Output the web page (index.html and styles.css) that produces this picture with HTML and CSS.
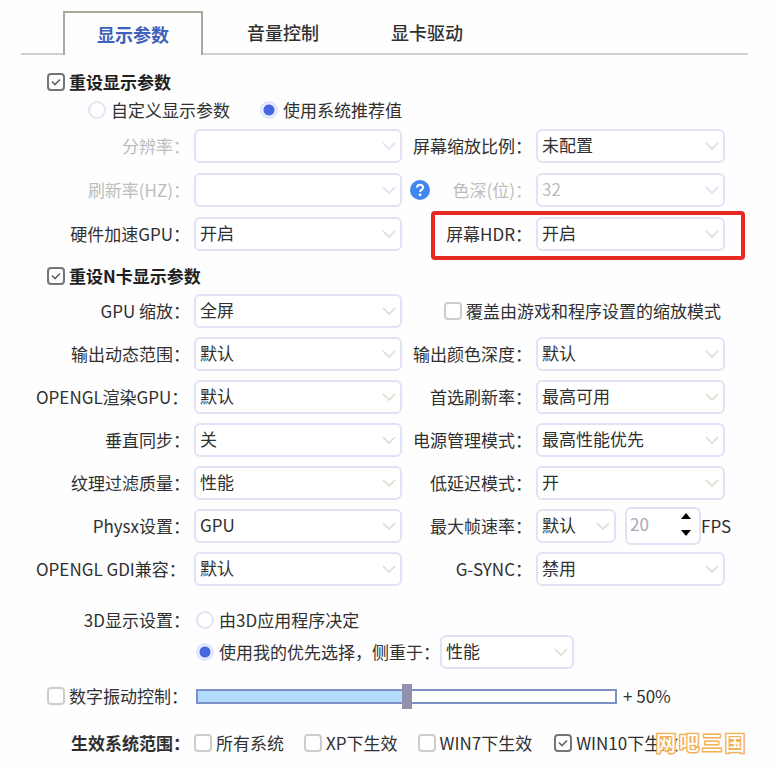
FILE: index.html
```html
<!DOCTYPE html>
<html lang="zh-CN">
<head>
    <meta charset="UTF-8">
    <meta name="viewport" content="width=device-width, initial-scale=1.0">
    <title>显示参数</title>
    <link rel="stylesheet" href="styles.css">
</head>
<body>
    <nav class="tabs">
        <button class="tab active" type="button">显示参数</button>
        <button class="tab tab-volume" type="button">音量控制</button>
        <button class="tab tab-driver" type="button">显卡驱动</button>
    </nav>

    <form class="settings">
        <label class="section-title"><input type="checkbox" checked>重设显示参数</label>
        <div class="mode-choice">
            <label><input type="radio" name="mode">自定义显示参数</label>
            <label><input type="radio" name="mode" checked>使用系统推荐值</label>
        </div>

        <div class="rows display-rows">
            <div class="row">
                <div class="field disabled">
                    <label for="resolution">分辨率：</label>
                    <select id="resolution" disabled><option></option></select>
                </div>
                <div class="field right">
                    <label for="scale">屏幕缩放比例：</label>
                    <select id="scale"><option>未配置</option></select>
                </div>
            </div>
            <div class="row">
                <div class="field disabled">
                    <label for="refresh">刷新率(HZ)：</label>
                    <select id="refresh" disabled><option></option></select>
                </div>
                <div class="field right disabled">
                    <div class="label-with-help">
                        <button class="help" type="button" aria-label="帮助">
                            <svg width="20" height="20" viewBox="0 0 20 20">
                                <circle cx="10" cy="10" r="10" fill="#3f87ee"/>
                                <path d="M7 7.6C7 5.8 8.2 4.7 10 4.7s3.1 1.1 3.1 2.7c0 2.2-2.9 2.3-2.9 4.6" fill="none" stroke="#fff" stroke-width="2.1"/>
                                <circle cx="10.1" cy="14.8" r="1.4" fill="#fff"/>
                            </svg>
                        </button>
                        <label for="depth">色深(位)：</label>
                    </div>
                    <select id="depth" disabled><option>32</option></select>
                </div>
            </div>
            <div class="row">
                <div class="field">
                    <label for="hw-gpu">硬件加速GPU：</label>
                    <select id="hw-gpu"><option>开启</option></select>
                </div>
                <div class="field right highlight">
                    <label for="hdr">屏幕HDR：</label>
                    <select id="hdr"><option>开启</option></select>
                </div>
            </div>
        </div>

        <label class="section-title"><input type="checkbox" checked>重设N卡显示参数</label>

        <div class="rows nvidia-rows">
            <div class="row">
                <div class="field">
                    <label for="gpu-scale">GPU 缩放：</label>
                    <select id="gpu-scale"><option>全屏</option></select>
                </div>
                <label class="override"><input type="checkbox">覆盖由游戏和程序设置的缩放模式</label>
            </div>
            <div class="row">
                <div class="field">
                    <label for="range">输出动态范围：</label>
                    <select id="range"><option>默认</option></select>
                </div>
                <div class="field right">
                    <label for="color-depth">输出颜色深度：</label>
                    <select id="color-depth"><option>默认</option></select>
                </div>
            </div>
            <div class="row">
                <div class="field long">
                    <label for="gl-gpu">OPENGL渲染GPU：</label>
                    <select id="gl-gpu"><option>默认</option></select>
                </div>
                <div class="field right">
                    <label for="prefer-refresh">首选刷新率：</label>
                    <select id="prefer-refresh"><option>最高可用</option></select>
                </div>
            </div>
            <div class="row">
                <div class="field">
                    <label for="vsync">垂直同步：</label>
                    <select id="vsync"><option>关</option></select>
                </div>
                <div class="field right">
                    <label for="power">电源管理模式：</label>
                    <select id="power"><option>最高性能优先</option></select>
                </div>
            </div>
            <div class="row">
                <div class="field">
                    <label for="texture">纹理过滤质量：</label>
                    <select id="texture"><option>性能</option></select>
                </div>
                <div class="field right">
                    <label for="latency">低延迟模式：</label>
                    <select id="latency"><option>开</option></select>
                </div>
            </div>
            <div class="row">
                <div class="field">
                    <label for="physx">Physx设置：</label>
                    <select id="physx"><option>GPU</option></select>
                </div>
                <div class="field right">
                    <label for="max-fps">最大帧速率：</label>
                    <div class="fps">
                        <select id="max-fps"><option>默认</option></select>
                        <div class="spinner">
                            <input id="fps-value" type="number" value="20">
                            <div class="spinner-buttons">
                                <button type="button" aria-label="增加"><svg width="12" height="7" viewBox="0 0 12 7"><path d="M6 0l5 6H1z"/></svg></button>
                                <button type="button" aria-label="减少"><svg width="12" height="7" viewBox="0 0 12 7"><path d="M6 7l5-6H1z"/></svg></button>
                            </div>
                        </div>
                        <label for="fps-value">FPS</label>
                    </div>
                </div>
            </div>
            <div class="row">
                <div class="field long">
                    <label for="gdi">OPENGL GDI兼容：</label>
                    <select id="gdi"><option>默认</option></select>
                </div>
                <div class="field right">
                    <label for="gsync">G-SYNC：</label>
                    <select id="gsync"><option>禁用</option></select>
                </div>
            </div>
        </div>

        <div class="three-d">
            <span class="group-label">3D显示设置：</span>
            <div class="three-d-options">
                <label><input type="radio" name="three-d">由3D应用程序决定</label>
                <div class="prefer">
                    <label><input type="radio" name="three-d" checked>使用我的优先选择，侧重于：</label>
                    <select aria-label="侧重于"><option>性能</option></select>
                </div>
            </div>
        </div>

        <div class="vibrance">
            <label class="vibrance-label"><input type="checkbox">数字振动控制：</label>
            <input class="slider" type="range" min="0" max="100" value="50" aria-label="数字振动">
            <output>+ 50%</output>
        </div>

        <div class="systems">
            <span class="group-label">生效系统范围：</span>
            <div class="system-list">
                <label><input type="checkbox">所有系统</label>
                <label><input type="checkbox">XP下生效</label>
                <label><input type="checkbox">WIN7下生效</label>
                <label class="win10"><input type="checkbox" checked>WIN10下生效</label>
            </div>
            <div class="watermark"><span>网</span><span>吧</span><span>三</span><span>国</span></div>
        </div>
    </form>
</body>
</html>
```

FILE: styles.css
```css
* {
    box-sizing: border-box;
}

body {
    margin: 0;
    background: #fefefe;
    color: #303030;
    font-family: "Noto Sans CJK SC", sans-serif;
    font-size: 17px;
    line-height: 24px;
}

button,
input,
select {
    margin: 0;
    padding: 0;
    font: inherit;
    color: inherit;
}

label,
output,
.group-label {
    white-space: nowrap;
}

/* Tabs */
.tabs {
    display: flex;
    height: 44px;
    margin: 11px 27px 0 21px;
    padding-left: 42px;
    border-bottom: 2px solid #d0d1c9;
}

.tab {
    height: 42px;
    border: none;
    background: none;
    font-size: 18px;
    font-weight: 500;
}

.tab.active {
    height: 44px;
    padding: 0 32px;
    border: 2px solid #a8a99c;
    border-bottom: none;
    background: #fefefe;
    color: #3f62bd;
    font-weight: bold;
}

.tab-volume {
    padding: 0 44px;
}

.tab-driver {
    padding: 0 28px;
}

.settings {
    padding: 15px 50px 8px 36px;
}

/* Check boxes and radios */
input[type="checkbox"],
input[type="radio"] {
    appearance: none;
    flex: none;
    width: 18px;
    height: 18px;
    margin-right: 4px;
    border: 2px solid #cdcdcd;
    border-radius: 4px;
    background: #fff center / 14px 14px no-repeat;
}

input[type="checkbox"]:checked {
    border-color: #73757a;
    background-image: url('data:image/svg+xml,<svg xmlns="http://www.w3.org/2000/svg" viewBox="0 0 14 14"><path d="M3 6.5l3 3 5-5" fill="none" stroke="%23606266" stroke-width="1.6"/></svg>');
}

input[type="radio"] {
    margin-right: 5px;
    border-color: #e4e4f6;
    border-radius: 50%;
}

input[type="radio"]:checked {
    border-color: #dfe5fb;
    background: radial-gradient(circle, #4568e2 5px, #eef1fd 6px);
}

label:has(> input) {
    display: flex;
    align-items: center;
}

.section-title {
    margin-left: 11px;
    color: #202020;
    font-weight: bold;
}

.mode-choice {
    display: flex;
    gap: 30px;
    margin: 4px 0 0 52px;
}

/* Setting rows */
.rows {
    display: grid;
    gap: 9px;
}

.display-rows {
    gap: 10px;
    margin: 7px 0 13px;
}

.nvidia-rows {
    margin-top: 6px;
}

.row {
    display: grid;
    grid-template-columns: 366fr 319fr;
    grid-template-rows: 34px;
    gap: 4px;
}

.field {
    position: relative;
    display: grid;
    grid-template-columns: 154px minmax(0, 1fr);
    grid-template-rows: 34px;
    gap: 4px;
    align-items: center;
    text-align: right;
}

.field.right {
    grid-template-columns: 126px minmax(0, 1fr);
}

.field.long > label {
    text-align: left;
}

.field.disabled {
    color: #bdbdbd;
}

.label-with-help {
    display: flex;
    align-items: center;
    justify-content: space-between;
    padding-left: 4px;
}

.help {
    display: flex;
    border: none;
    background: none;
}

select {
    appearance: none;
    width: 100%;
    height: 34px;
    padding: 0 28px 2px 4px;
    border: 2px solid #e2e2f6;
    border-radius: 6px;
    background: #fff url('data:image/svg+xml,<svg xmlns="http://www.w3.org/2000/svg" viewBox="0 0 14 8"><path d="M1 1l6 6 6-6" fill="none" stroke="%23dcdcd0" stroke-width="1.6"/></svg>') right 4px center / 14px 8px no-repeat;
}

select:disabled {
    opacity: 1;
    color: #bdbdbd;
    background-image: url('data:image/svg+xml,<svg xmlns="http://www.w3.org/2000/svg" viewBox="0 0 14 8"><path d="M1 1l6 6 6-6" fill="none" stroke="%23dddff0" stroke-width="1.6"/></svg>');
}

.highlight::after {
    content: "";
    position: absolute;
    inset: -6px -20px -9px 25px;
    border: 4px solid #e62a22;
    border-radius: 4px;
    pointer-events: none;
}

.override {
    padding-left: 38px;
}

.fps {
    display: flex;
    align-items: center;
}

.fps select {
    flex: none;
    width: 80px;
    margin-right: 9px;
}

.spinner {
    display: flex;
    flex: 1;
    min-width: 76px;
    height: 38px;
    padding: 0 7px 4px 3px;
    border: 2px solid #e2e2f6;
    border-radius: 6px;
    background: #fff;
}

.spinner input {
    flex: 1;
    width: 0;
    border: none;
    background: none;
    color: #a9a9b8;
    appearance: textfield;
}

.spinner-buttons {
    display: flex;
    flex-direction: column;
    justify-content: space-between;
    padding: 4px 0 3px;
}

.spinner-buttons button {
    display: flex;
    border: none;
    background: none;
}

/* 3D settings */
.three-d {
    display: grid;
    grid-template-columns: 154px 1fr;
    gap: 6px;
    margin-top: 22px;
}

.group-label {
    text-align: right;
}

.three-d-options {
    display: grid;
    gap: 3px;
}

.prefer {
    display: flex;
    align-items: center;
}

.prefer select {
    width: 134px;
}

/* Digital vibrance */
.vibrance {
    display: flex;
    align-items: center;
    margin: 15px 0 0 11px;
}

.vibrance-label {
    width: 149px;
}

.slider {
    appearance: none;
    flex: 1;
    height: 15px;
    border: 2px solid #7c8fc6;
    background: linear-gradient(to right, #b3dbfd 50%, #fff 50%);
}

.slider::-webkit-slider-thumb {
    appearance: none;
    width: 10px;
    height: 25px;
    background: #9292ad;
}

.vibrance output {
    width: 108px;
    padding-left: 6px;
}

/* Systems */
.systems {
    position: relative;
    display: grid;
    grid-template-columns: 154px 1fr;
    gap: 4px;
    margin-top: 23px;
}

.systems .group-label {
    font-weight: bold;
}

.system-list {
    display: flex;
    gap: 20px;
}

.win10 {
    margin-left: 2px;
}

.watermark {
    position: absolute;
    right: -20px;
    top: 0;
    display: flex;
    gap: 3px;
    color: #fff;
    font-size: 20px;
    font-weight: 500;
    -webkit-text-stroke: 3px #f2b259;
    paint-order: stroke fill;
}
```
